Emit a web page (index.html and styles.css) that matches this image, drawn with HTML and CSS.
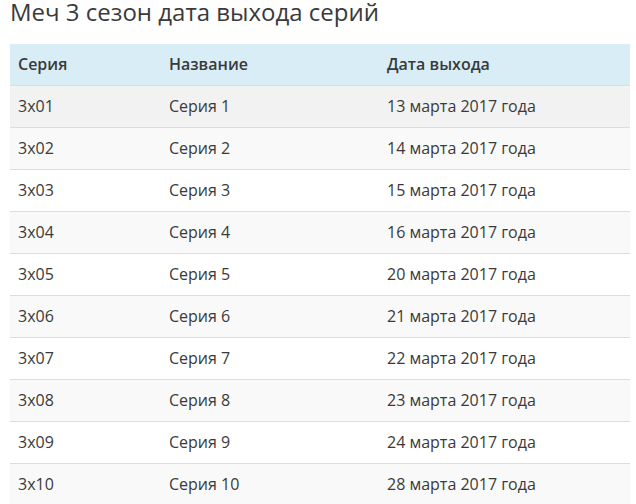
FILE: index.html
```html
<!DOCTYPE html>
<html lang="ru">
<head>
<meta charset="utf-8">
<link rel="stylesheet" href="styles.css">
</head>
<body>
<h2 class="title">Меч 3 сезон дата выхода серий</h2>
<table class="episodes">
<thead>
<tr><th class="c1">Серия</th><th class="c2">Название</th><th class="c3">Дата выхода</th></tr>
</thead>
<tbody>
<tr class="hover"><td>3x01</td><td>Серия 1</td><td>13 марта 2017 года</td></tr>
<tr><td>3x02</td><td>Серия 2</td><td>14 марта 2017 года</td></tr>
<tr><td>3x03</td><td>Серия 3</td><td>15 марта 2017 года</td></tr>
<tr><td>3x04</td><td>Серия 4</td><td>16 марта 2017 года</td></tr>
<tr><td>3x05</td><td>Серия 5</td><td>20 марта 2017 года</td></tr>
<tr><td>3x06</td><td>Серия 6</td><td>21 марта 2017 года</td></tr>
<tr><td>3x07</td><td>Серия 7</td><td>22 марта 2017 года</td></tr>
<tr><td>3x08</td><td>Серия 8</td><td>23 марта 2017 года</td></tr>
<tr><td>3x09</td><td>Серия 9</td><td>24 марта 2017 года</td></tr>
<tr><td>3x10</td><td>Серия 10</td><td>28 марта 2017 года</td></tr>
</tbody>
</table>
</body>
</html>
```
FILE: styles.css
```css
body {
  margin: 0;
  padding: 0 6px 0 10px;
  font-family: "Open Sans", "DejaVu Sans", sans-serif;
  color: #3a3a3a;
  background: #fff;
}
.title {
  margin: 0;
  padding: 0;
  font-size: 24px;
  font-weight: 400;
  line-height: 24px;
  height: 44px;
  color: #3a3a3a;
}
.episodes {
  width: 620px;
  border-collapse: collapse;
  font-size: 16px;
}
.episodes th, .episodes td {
  text-align: left;
  padding: 8px 8px;
  height: 25px;
  line-height: 25px;
  box-sizing: content-box;
}
.episodes th {
  background: #d9edf7;
  font-weight: 600;
  border-bottom: 1px solid #ddd;
}
.episodes td {
  border-bottom: 1px solid #ddd;
}
.c1 { width: 135px; }
.c2 { width: 202px; }
.episodes tbody tr:nth-child(even) { background: #f9f9f9; }
.episodes tbody tr.hover { background: #f2f2f2; }
```
